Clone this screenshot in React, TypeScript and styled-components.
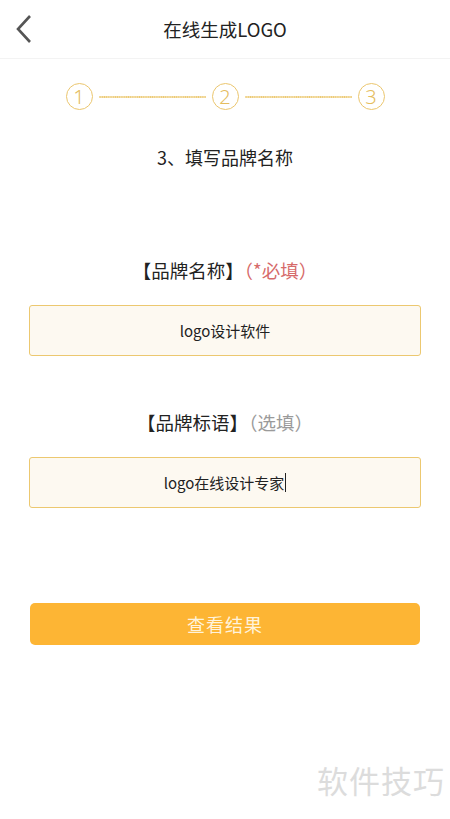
import React from "react";
import styled, { createGlobalStyle } from "styled-components";

const Global = createGlobalStyle`
  html, body { margin: 0; padding: 0; background: #fff; }
  body { font-family: "Noto Sans CJK SC", "Noto Sans", sans-serif; color: #222; }
  #root { width: 450px; min-height: 819px; }
`;

const Page = styled.div`
  position: relative;
  width: 450px;
  height: 819px;
  overflow: hidden;
  background: #fff;
  display: flex;
  flex-direction: column;
`;

const Header = styled.header`
  height: 58px;
  display: grid;
  grid-template-columns: 60px 1fr 60px;
  align-items: center;
  border-bottom: 1px solid #f3f3f3;
`;

const BackButton = styled.div`
  display: flex;
  align-items: center;
  padding-left: 15px;
  height: 100%;
`;

const Title = styled.h1`
  margin: 0;
  text-align: center;
  font-size: 18.5px;
  font-weight: 400;
  color: #222;
  line-height: 24px;
`;

const Steps = styled.div`
  display: flex;
  align-items: center;
  justify-content: center;
  margin-top: 24px;
  gap: 6px;
`;

const StepCircle = styled.div`
  box-sizing: border-box;
  width: 27px;
  height: 27px;
  border: 1.3px solid #ebc66e;
  border-radius: 50%;
  display: flex;
  align-items: center;
  justify-content: center;
  color: #e5bd5e;
  font-family: "Noto Sans", sans-serif;
  font-weight: 300;
  font-size: 20px;
  line-height: 1;
`;

const Dots = styled.div`
  width: 107px;
  height: 2px;
  background-image: radial-gradient(circle, #ecc870 0.8px, transparent 1px);
  background-size: 2.2px 2px;
  background-repeat: repeat-x;
`;

const StepTitle = styled.div`
  margin-top: 35px;
  text-align: center;
  font-size: 18px;
  line-height: 24px;
  color: #222;
`;

const Form = styled.div`
  display: flex;
  flex-direction: column;
  padding: 0 29px;
  margin-top: 89px;
`;

const FieldLabel = styled.div<{ $gap?: number }>`
  text-align: center;
  font-size: 18.5px;
  line-height: 24px;
  color: #222;
  margin-top: ${(p) => p.$gap ?? 0}px;
`;

const Hint = styled.span<{ $required?: boolean }>`
  color: ${(p) => (p.$required ? "#d66a6a" : "#9a9a9a")};
`;

const Field = styled.div`
  margin-top: 23px;
  height: 49px;
  border: 1px solid #ecc870;
  border-radius: 3px;
  background: #fdf9f1;
  display: flex;
  align-items: center;
  justify-content: center;
  font-size: 15px;
  color: #222;
`;

const Caret = styled.span`
  display: inline-block;
  width: 1px;
  height: 19px;
  background: #222;
  margin-left: 1px;
`;

const SubmitButton = styled.button`
  margin: 95px 30px 0;
  height: 42px;
  border: none;
  border-radius: 5px;
  background: #fdb534;
  color: #fff3dc;
  font-family: inherit;
  font-size: 18px;
  font-weight: 400;
  letter-spacing: 1px;
`;

const Watermark = styled.div`
  position: absolute;
  right: 5px;
  bottom: 17px;
  font-size: 31px;
  color: #dcdcdc;
  letter-spacing: 1px;
`;

export default function App() {
  return (
    <>
      <Global />
      <Page>
        <Header>
          <BackButton>
            <svg width="18" height="30" viewBox="0 0 18 30">
              <path d="M15 2 L3 15 L15 28" fill="none" stroke="#555" strokeWidth="2.6" />
            </svg>
          </BackButton>
          <Title>在线生成LOGO</Title>
          <div />
        </Header>
        <Steps>
          <StepCircle>1</StepCircle>
          <Dots />
          <StepCircle>2</StepCircle>
          <Dots />
          <StepCircle>3</StepCircle>
        </Steps>
        <StepTitle>3、填写品牌名称</StepTitle>
        <Form>
          <FieldLabel>
            【品牌名称】<Hint $required>（*必填）</Hint>
          </FieldLabel>
          <Field>logo设计软件</Field>
          <FieldLabel $gap={54}>
            【品牌标语】<Hint>（选填）</Hint>
          </FieldLabel>
          <Field>
            logo在线设计专家
            <Caret />
          </Field>
        </Form>
        <SubmitButton>查看结果</SubmitButton>
        <Watermark>软件技巧</Watermark>
      </Page>
    </>
  );
}
